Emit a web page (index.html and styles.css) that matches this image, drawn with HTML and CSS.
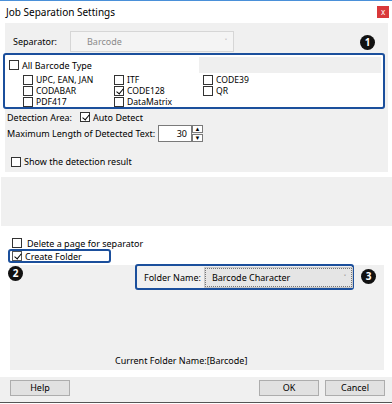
FILE: index.html
```html
<!DOCTYPE html>
<html lang="en">
<head>
    <meta charset="UTF-8">
    <meta name="viewport" content="width=device-width, initial-scale=1.0">
    <title>Job Separation Settings</title>
    <link rel="stylesheet" href="styles.css">
</head>
<body>

<div class="window">
    <div class="titlebar">
        <span class="title">Job Separation Settings</span>
        <span class="close">x</span>
    </div>

    <div class="upper">
        <div class="sep-row">
            <span class="sep-label">Separator:</span>
            <div class="select disabled">
                <span>Barcode</span>
                <span class="chev">&#709;</span>
            </div>
        </div>

        <div class="types-box">
            <div class="types-head">
                <label class="check-item head-item"><span class="cb"></span>All Barcode Type</label>
            </div>
            <div class="types-grid">
                <label class="check-item"><span class="cb"></span>UPC, EAN, JAN</label>
                <label class="check-item"><span class="cb"></span>ITF</label>
                <label class="check-item"><span class="cb"></span>CODE39</label>
                <label class="check-item"><span class="cb"></span>CODABAR</label>
                <label class="check-item"><span class="cb checked"></span>CODE128</label>
                <label class="check-item"><span class="cb"></span>QR</label>
                <label class="check-item"><span class="cb"></span>PDF417</label>
                <label class="check-item"><span class="cb"></span>DataMatrix</label>
            </div>
        </div>

        <div class="detect-row">
            <span>Detection Area:</span>
            <label class="check-item"><span class="cb checked"></span>Auto Detect</label>
        </div>

        <div class="maxlen-row">
            <span>Maximum Length of Detected Text:</span>
            <div class="spin">
                <span class="spin-value">30</span>
                <div class="spin-btns">
                    <span class="spin-btn">&#9650;</span>
                    <span class="spin-btn">&#9660;</span>
                </div>
            </div>
        </div>

        <div class="show-row">
            <label class="check-item"><span class="cb"></span>Show the detection result</label>
        </div>
    </div>

    <div class="blank"></div>

    <div class="lower">
        <label class="check-item delete-row"><span class="cb"></span>Delete a page for separator</label>
        <div class="create-box">
            <label class="check-item"><span class="cb checked plain"></span>Create Folder</label>
        </div>

        <div class="folder-panel">
            <div class="folder-box">
                <span class="folder-label">Folder Name:</span>
                <div class="select folder-select">
                    <span>Barcode Character</span>
                    <span class="chev">&#709;</span>
                </div>
            </div>
            <div class="current">Current Folder Name:[Barcode]</div>
        </div>
    </div>

    <div class="buttons">
        <span class="btn">Help</span>
        <span class="spacer"></span>
        <span class="btn">OK</span>
        <span class="btn">Cancel</span>
    </div>

    <span class="badge badge-1">1</span>
    <span class="badge badge-2">2</span>
    <span class="badge badge-3">3</span>
</div>

</body>
</html>
```

FILE: styles.css
```css
body {
    margin: 0;
    padding: 0;
    background-color: #fff;
    font-family: "Noto Sans", "Open Sans", sans-serif;
    font-size: 9px;
    color: #000;
}
.window {
    position: relative;
    width: 392px;
    height: 404px;
    background-color: #fff;
    display: flex;
    flex-direction: column;
    box-sizing: border-box;
    border-top: 1px solid #4a90d9;
    overflow: hidden;
}
.titlebar {
    height: 22px;
    display: flex;
    align-items: center;
    justify-content: space-between;
    padding: 0 3px 0 6px;
}
.title {
    font-size: 10px;
    line-height: 12px;
}
.close {
    width: 12px;
    height: 12px;
    background-color: #d9383a;
    color: #fff;
    font-size: 8px;
    line-height: 11px;
    text-align: center;
}

/* upper settings panel */
.upper {
    margin: 0 4px 0 5px;
    height: 149px;
    background-color: #f0f0f0;
    display: flex;
    flex-direction: column;
}
.sep-row {
    display: flex;
    align-items: center;
    margin-top: 8px;
    padding-left: 8px;
}
.sep-label {
    width: 57px;
}
.select {
    display: flex;
    align-items: center;
    justify-content: space-between;
    box-sizing: border-box;
}
.select.disabled {
    width: 164px;
    height: 21px;
    border: 1px solid #d6d6d6;
    background-color: #f4f4f4;
    color: #8a8a8a;
    padding: 0 6px 0 16px;
}
.chev {
    font-size: 7px;
    color: #777;
}
.types-box {
    margin: 1px 0 0 -2px;
    width: 382px;
    height: 56px;
    box-sizing: border-box;
    border: 2px solid #1b4f9c;
    border-radius: 3px;
    background-color: #fff;
    padding: 2px 2px 0 0;
}
.types-head {
    height: 16px;
    background-color: #efefef;
    display: flex;
}
.head-item {
    width: 190px;
    background-color: #fff;
    padding-left: 4px;
}
.types-grid {
    display: grid;
    grid-template-columns: 91px 89px 80px;
    grid-auto-rows: 11px;
    padding: 1px 0 0 18px;
}
.types-grid .check-item {
    font-size: 8.6px;
    line-height: 10px;
}
.check-item {
    display: flex;
    align-items: center;
    gap: 3px;
    line-height: 11px;
    white-space: nowrap;
}
.cb {
    width: 10px;
    height: 10px;
    box-sizing: border-box;
    border: 1px solid #333;
    background-color: #fff;
    position: relative;
    flex: none;
}
.cb.checked::after {
    content: "";
    position: absolute;
    left: 3px;
    top: 0px;
    width: 3px;
    height: 6px;
    border: solid #000;
    border-width: 0 1.5px 1.5px 0;
    transform: rotate(40deg);
}
.detect-row {
    display: flex;
    align-items: center;
    gap: 8px;
    margin-top: 2px;
    padding-left: 2px;
    height: 12px;
}
.maxlen-row {
    display: flex;
    align-items: center;
    margin-top: 2px;
    padding-left: 2px;
    height: 17px;
}
.maxlen-row > span {
    width: 151px;
    white-space: nowrap;
}
.spin {
    display: flex;
    height: 17px;
}
.spin-value {
    width: 34px;
    box-sizing: border-box;
    border: 1px solid #7a7a7a;
    background-color: #fff;
    text-align: right;
    padding-right: 4px;
    line-height: 15px;
}
.spin-btns {
    display: flex;
    flex-direction: column;
    width: 11px;
}
.spin-btn {
    height: 8px;
    box-sizing: border-box;
    border: 1px solid #7a7a7a;
    background-color: #fff;
    font-size: 6px;
    line-height: 6px;
    text-align: center;
}
.spin-btn + .spin-btn {
    margin-top: 1px;
}
.show-row {
    margin-top: 14px;
    padding-left: 6px;
}

.blank {
    margin-top: 5px;
    margin-left: 1px;
    height: 49px;
    background-color: #f0f0f0;
}

/* lower folder section */
.lower {
    display: flex;
    flex-direction: column;
    padding-top: 11px;
}
.delete-row {
    padding-left: 12px;
    height: 12px;
    gap: 5px;
}
.create-box {
    margin: 0 0 0 8px;
    width: 103px;
    height: 14px;
    box-sizing: border-box;
    border: 2px solid #1b4f9c;
    border-radius: 3px;
    padding-left: 2px;
    display: flex;
    align-items: center;
}
.cb.plain {
    border-color: #555;
}
.folder-panel {
    margin: 2px 8px 0 10px;
    height: 105px;
    background-color: #f0f0f0;
    display: flex;
    flex-direction: column;
}
.folder-box {
    margin: -1px 0 0 125px;
    width: 219px;
    height: 26px;
    box-sizing: border-box;
    border: 2px solid #1b4f9c;
    border-radius: 3px;
    display: flex;
    align-items: center;
    gap: 4px;
    padding-left: 7px;
}
.folder-label {
    flex: none;
    white-space: nowrap;
}
.folder-select {
    width: 147px;
    flex: none;
    height: 19px;
    background-color: #e5e5e5;
    border: 1px dotted #777;
    outline: 1px solid #c8c8c8;
    padding: 0 5px 0 6px;
}
.folder-select .chev {
    color: #333;
}
.current {
    margin-top: auto;
    padding: 0 0 3px 105px;
    line-height: 12px;
}

/* bottom button bar */
.buttons {
    margin-top: 7px;
    height: 26px;
    box-sizing: border-box;
    background-color: #f0f0f0;
    border-bottom: 1px solid #555;
    display: flex;
    align-items: flex-start;
    padding: 3px 7px 0 10px;
    gap: 6px;
}
.spacer {
    flex: 1;
}
.btn {
    width: 60px;
    height: 16px;
    box-sizing: border-box;
    border: 1px solid #adadad;
    background-color: #e1e1e1;
    text-align: center;
    line-height: 14px;
}

/* annotation badges */
.badge {
    position: absolute;
    width: 15px;
    height: 15px;
    border-radius: 50%;
    background-color: #111;
    color: #fff;
    font-size: 10px;
    font-weight: bold;
    line-height: 15px;
    text-align: center;
}
.badge-1 {
    left: 360px;
    top: 34px;
}
.badge-2 {
    left: 8px;
    top: 265px;
}
.badge-3 {
    left: 361px;
    top: 268px;
}
```
